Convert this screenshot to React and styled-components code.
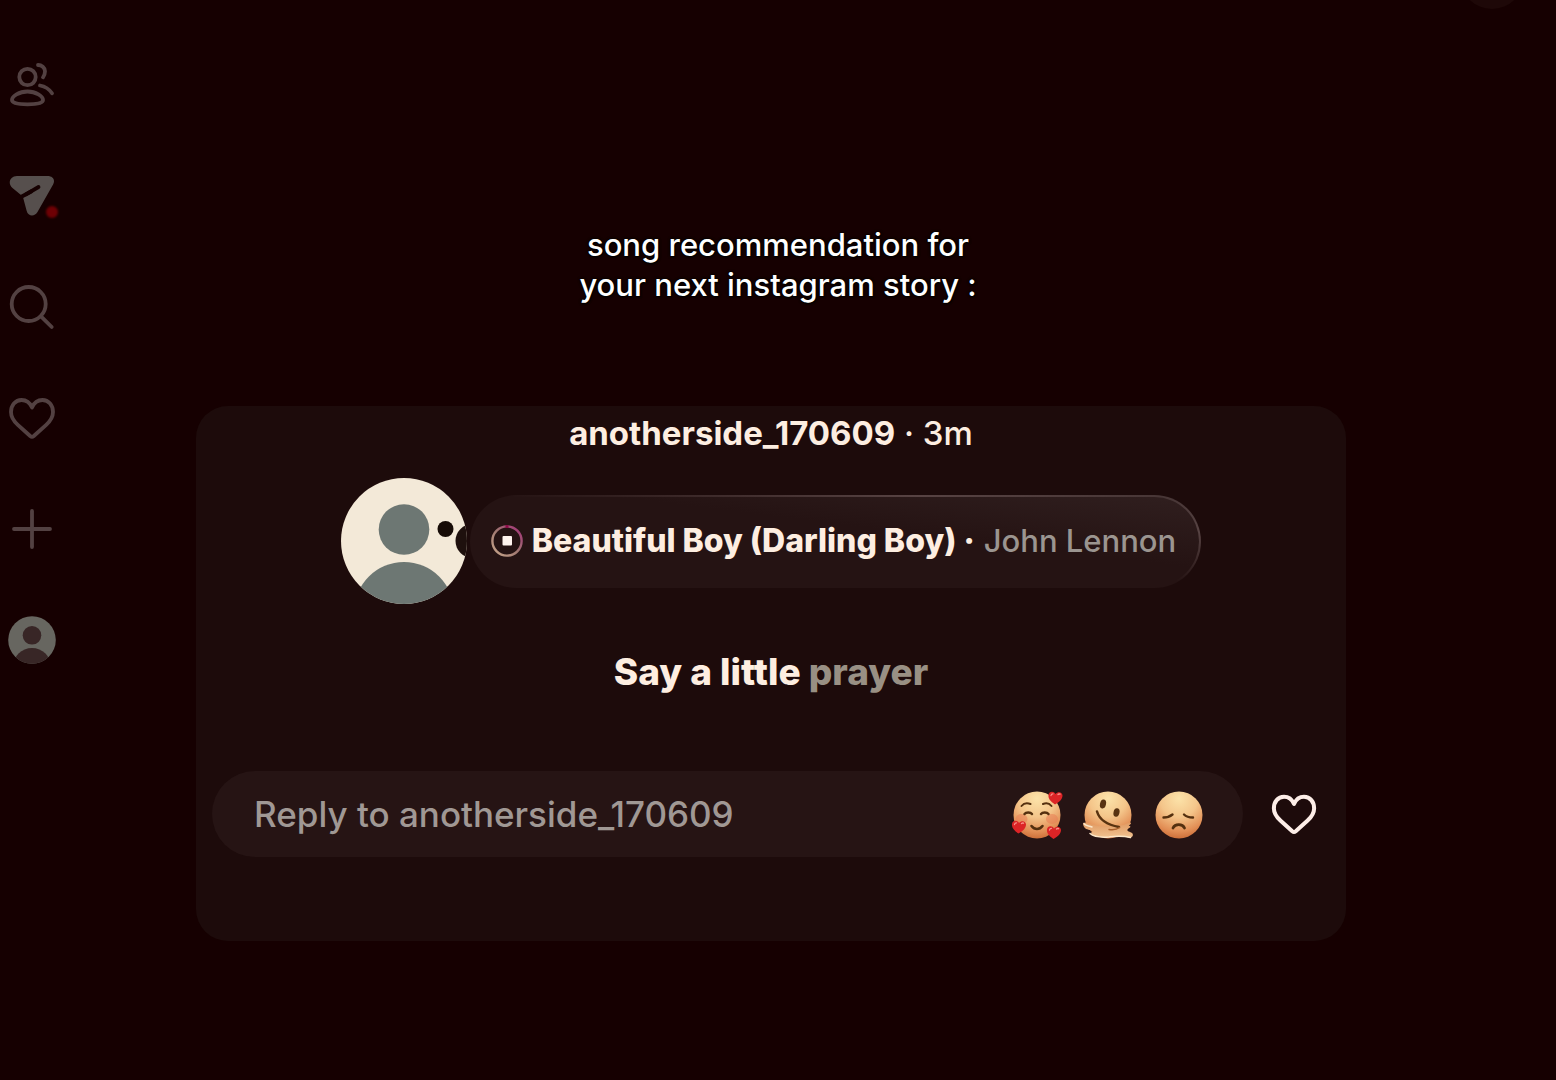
import React, { useState } from 'react';
import styled, { createGlobalStyle } from 'styled-components';

const GlobalStyle = createGlobalStyle`
  * {
    box-sizing: border-box;
  }

  body {
    margin: 0;
    background: #160001;
    color: #fdeee1;
    font-family: Inter, "Liberation Sans", sans-serif;
  }
`;

const Page = styled.div`
  position: relative;
  display: grid;
  grid-template-columns: 64px 1fr 64px;
  min-height: 100vh;
  overflow: hidden;
`;

const Rail = styled.nav`
  display: flex;
  flex-direction: column;
  gap: 63px;
  padding: 61px 8px 0;
`;

const RailLink = styled.a`
  position: relative;
  display: block;
  width: 48px;
  height: 48px;
  color: ${props => (props.$solid ? '#564f4d' : '#534142')};
`;

const Unread = styled.span`
  position: absolute;
  right: -2px;
  bottom: 2px;
  width: 12px;
  height: 12px;
  border-radius: 50%;
  background: #6e0004;
  filter: blur(1px);
`;

const Main = styled.main`
  padding-top: 225px;
`;

const Headline = styled.h1`
  margin: 0 0 101px;
  font-size: 31px;
  font-weight: 500;
  line-height: 40px;
  text-align: center;
  color: #fff;
  text-shadow: 0 0 3px #000, 0 0 3px #000, 1px 1px 2px #000;
`;

const Card = styled.article`
  display: flex;
  flex-direction: column;
  align-items: center;
  margin: 0 146px 0 132px;
  padding: 7px 16px 84px;
  border-radius: 32px;
  background: #1d0b0b;
`;

const Byline = styled.header`
  font-size: 33px;
  font-weight: 500;
  line-height: 40px;

  b {
    font-weight: 700;
  }
`;

const NoteRow = styled.div`
  display: flex;
  align-items: center;
  gap: 3px;
  margin-top: 25px;
`;

const Bubble = styled.div`
  display: flex;
  align-items: center;
  gap: 9px;
  height: 93px;
  padding: 0 23px 0 19px;
  border: 2px solid transparent;
  border-radius: 47px;
  background:
    linear-gradient(to top right, #251313 60%, #301f1f) padding-box,
    linear-gradient(to top right, #251313 52%, #574343 80%, #453434) border-box;
  font-size: 32px;
  line-height: 40px;
  white-space: nowrap;
`;

const Song = styled.b`
  font-weight: 800;
`;

const Artist = styled.span`
  color: #9b9590;
  font-size: 31px;
  font-weight: 500;
`;

const Lyric = styled.p`
  margin: 44px 0 75px;
  font-size: 37px;
  font-weight: 800;
  line-height: 48px;
`;

const Upcoming = styled.span`
  color: #999084;
`;

const ReplyRow = styled.form`
  display: flex;
  align-items: center;
  align-self: stretch;
  gap: 28px;
  padding-right: 13px;
`;

const ReplyField = styled.div`
  display: flex;
  flex: 1;
  align-items: center;
  gap: 19px;
  height: 86px;
  padding: 0 37px 0 42px;
  border-radius: 43px;
  background: #261414;
`;

const ReplyInput = styled.input`
  flex: 1;
  min-width: 0;
  padding: 0;
  border: 0;
  outline: 0;
  background: transparent;
  color: #fdeee1;
  font-family: inherit;
  font-size: 35px;
  font-weight: 500;
  line-height: 44px;

  &::placeholder {
    color: #a09894;
    opacity: 1;
  }
`;

const IconButton = styled.button`
  flex: none;
  width: ${props => props.$size}px;
  height: ${props => props.$size}px;
  padding: 0;
  border: 0;
  background: none;
  color: #fdeee8;
  cursor: pointer;
`;

const CloseButton = styled(IconButton)`
  position: absolute;
  top: -55px;
  right: 32px;
  border-radius: 50%;
  background: #1e0808;
`;

const Icon = styled.svg`
  display: block;
  width: 100%;
  height: 100%;
  fill: none;
  stroke: currentColor;
  stroke-width: ${props => props.$weight || 4};
  stroke-linecap: round;
  stroke-linejoin: round;
`;

const Picture = styled.svg`
  display: block;
  flex: none;
  width: ${props => props.$size}px;
  height: ${props => props.$size}px;
`;

const FriendsIcon = () => (
  <Icon viewBox="0 0 48 48" $weight={3.8}>
    <circle cx="19.5" cy="16" r="8.2" />
    <path d="M4 39c0-3.4 7-8.5 15.5-8.5S35 35.6 35 39c0 3.2-6 4.3-15.5 4.3S4 42.200 4 39z" />
    <path d="M30 4c3.5 0 7 2.6 7 6.3 0 2.2-.8 4.4-2 6" />
    <path d="M32 24.500c4.500.8 9.500 4 12 7.800" />
  </Icon>
);

const SendIcon = () => (
  <Icon viewBox="0 0 48 48" $weight={3.8}>
    <path
      fill="currentColor"
      stroke="none"
      d="M9 4h30.500c5.500 0 8 4 5.600 8.500L29.500 40c-2.800 5-9.500 4.500-10.800-1L14.800 24.500 4.500 16C-.8 11.500 2 4 9 4z"
    />
    <path stroke="#160001" strokeLinecap="butt" d="M12 25.500l12-6.500" />
    <path stroke="#160001" d="M18 22.300L30.500 15" />
  </Icon>
);

const SearchIcon = () => (
  <Icon viewBox="0 0 48 48" $weight={3.8}>
    <circle cx="20.7" cy="21" r="17" />
    <path d="M33 33.3L43.7 44" />
  </Icon>
);

const HeartIcon = ({ weight }) => (
  <Icon viewBox="0 0 48 48" $weight={weight}>
    <path d="M24 13.500C21.800 8.500 18 6 13.600 6 7.200 6 3 11.500 3 18c0 5.200 2.600 9 6.800 12.800L22.200 42c1.200 1 2.400 1 3.600 0L38.200 30.800C42.400 27 45 23.200 45 18c0-6.500-4.200-12-10.600-12C30 6 26.200 8.500 24 13.500z" />
  </Icon>
);

const PlusIcon = () => (
  <Icon viewBox="0 0 48 48" $weight={3.8}>
    <path d="M24 6v36M6 24h36" />
  </Icon>
);

const ProfileIcon = () => (
  <Picture viewBox="0 0 48 48" $size={48}>
    <clipPath id="profile-clip"><circle cx="24" cy="24" r="23.8" /></clipPath>
    <g clipPath="url(#profile-clip)">
      <rect width="48" height="48" fill="#676660" />
      <circle cx="24" cy="19.3" r="9.3" fill="#382626" />
      <circle cx="24" cy="51" r="19" fill="#382626" />
    </g>
  </Picture>
);

// The two dots are the tail of the note bubble next to it
const Avatar = () => (
  <Picture viewBox="0 0 126 126" $size={126} role="img" aria-label="anotherside_170609">
    <clipPath id="avatar-clip"><circle cx="63" cy="63" r="63" /></clipPath>
    <g clipPath="url(#avatar-clip)">
      <rect width="126" height="126" fill="#f3e9d8" />
      <circle cx="63" cy="51.5" r="25.3" fill="#6d7773" />
      <circle cx="63" cy="134" r="50" fill="#6d7773" />
      <circle cx="104.5" cy="51" r="8" fill="#170c07" />
      <circle cx="131.5" cy="63" r="17" fill="#1e100d" />
    </g>
  </Picture>
);

const StopIcon = () => (
  <Picture viewBox="0 0 32 32" $size={32}>
    <linearGradient id="ring" x1="0" y1="1" x2="1" y2="0">
      <stop offset="0" stopColor="#c9a78c" />
      <stop offset=".5" stopColor="#a07871" />
      <stop offset="1" stopColor="#a32c78" />
    </linearGradient>
    <circle cx="16" cy="16" r="14.6" fill="none" stroke="url(#ring)" strokeWidth="2.4" />
    <path d="M14.500 1.500h3" stroke="#8c0c48" strokeWidth="3" />
    <rect x="11.500" y="11" width="9.500" height="9.500" rx="1" fill="#fff4ee" />
  </Picture>
);

const Face = () => (
  <>
    <radialGradient id="face" cx=".5" cy=".15" r=".88">
      <stop offset="0" stopColor="#fce3a9" />
      <stop offset=".45" stopColor="#f4c58a" />
      <stop offset=".8" stopColor="#e28e55" />
      <stop offset="1" stopColor="#c96a35" />
    </radialGradient>
    <circle cx="25" cy="25" r="23.5" fill="url(#face)" />
  </>
);

const TinyHeart = ({ x, y }) => (
  <g transform={`translate(${x} ${y})`}>
    <path
      d="M6.500 13.500C2 10.500-.5 7.500 0 4 .5.500 5-.500 7 3c2.500-3.200 7-2 7 1.500 0 3.500-3 6.500-7.500 9z"
      fill="#dc2426"
    />
    <path d="M2.500 4.500c.2-1.200 1-1.700 2-1.700M9.500 3.500c.6-.5 1.400-.6 2-.3" fill="none" stroke="#f9918a" strokeWidth="1.300" strokeLinecap="round" />
  </g>
);

const LovedFace = () => (
  <Picture viewBox="0 -2 52 52" $size={52}>
    <Face />
    <ellipse cx="9.5" cy="29" rx="6" ry="5" fill="#e87951" opacity=".5" />
    <ellipse cx="40" cy="29" rx="6" ry="5" fill="#e87951" opacity=".5" />
    <g fill="none" stroke="#54300f" strokeWidth="2" strokeLinecap="round">
      <path d="M9.500 16c2-2.500 5.500-3.500 9-2M31 14c3.500-1.500 6.500-.5 8.500 2" />
      <path d="M12.500 24c1.500-2 6-2 7.500 0M29 24c1.500-2 6-2 7.500 0" strokeWidth="2.400" />
      <path d="M19.500 36c3 4 8 4 11 0" strokeWidth="2.600" />
    </g>
    <TinyHeart x={36.5} y={1} />
    <TinyHeart x={0} y={30} />
    <TinyHeart x={35} y={35.5} />
  </Picture>
);

const MeltingFace = () => (
  <Picture viewBox="0 -2 52 52" $size={52}>
    <Face />
    <linearGradient id="melt" x1="0" y1="0" x2="0" y2="1">
      <stop offset="0" stopColor="#e09a62" />
      <stop offset="1" stopColor="#f0c290" />
    </linearGradient>
    <path
      d="M.5 33c2.500-1.500 5 .5 8 1.500 9 2.500 22 2.500 32 .5 2.500-.7 4.500-2.500 7-2.500 1.500 1-.5 2-2 3 1.500.3 2.500 1 1.500 2-1.500 1-3 1.500-2.500 3 .5 1.500 3 1 5 3 1.200 2.500-.5 4.500-3.500 4-5-.8-8-1.500-12-1-6 .8-16 1.500-22-.5-4-1-5-3-2.500-4.500C8 39.500 3 40 1.500 37.500.5 36-.5 34.500.5 33z"
      fill="url(#melt)"
    />
    <path d="M1 33.500c1 2.500 4.500 2 8 3.500M7 43.500c4 3.500 12 4 19 3.500 8-.8 12-1.500 21.500.5" fill="none" stroke="#fbe6c8" strokeWidth="1.500" strokeLinecap="round" />
    <ellipse cx="20" cy="14" rx="3" ry="4.5" fill="#593311" transform="rotate(12 20 14)" />
    <ellipse cx="33.5" cy="22.5" rx="3" ry="4.300" fill="#593311" transform="rotate(12 33.5 22.5)" />
    <path d="M14 21.500c2.500 8.500 11 13.500 22 15.500" fill="none" stroke="#593311" strokeWidth="2.500" strokeLinecap="round" />
    <path d="M26 39.500c4 .5 8 0 10.500-2" fill="none" stroke="#a9602d" strokeWidth="1.400" strokeLinecap="round" />
  </Picture>
);

const SadFace = () => (
  <Picture viewBox="0 -2 52 52" $size={52}>
    <Face />
    <g fill="none" stroke="#54300f" strokeWidth="2.4" strokeLinecap="round">
      <path d="M9.500 27.500c3.500 0 6.500-1 9-3M30 24.500c2 2 5.500 3 9 3" />
      <path d="M19 38c2-4.500 9.500-4.500 11.500 0" strokeWidth="2.800" />
    </g>
  </Picture>
);

const railItems = [
  { label: 'Friends', icon: <FriendsIcon /> },
  { label: 'Messages', icon: <SendIcon />, solid: true, unread: true },
  { label: 'Search', icon: <SearchIcon /> },
  { label: 'Activity', icon: <HeartIcon weight={3.8} /> },
  { label: 'Create', icon: <PlusIcon /> },
  { label: 'Profile', icon: <ProfileIcon /> },
];

const reactions = [
  { label: 'Loved', face: <LovedFace /> },
  { label: 'Melting', face: <MeltingFace /> },
  { label: 'Sad', face: <SadFace /> },
];

function App() {
  const [reply, setReply] = useState('');

  return (
    <>
      <GlobalStyle />
      <Page>
        <Rail>
          {railItems.map(item => (
            <RailLink key={item.label} href="#" aria-label={item.label} $solid={item.solid}>
              {item.icon}
              {item.unread ? <Unread /> : null}
            </RailLink>
          ))}
        </Rail>

        <Main>
          <Headline>
            song recommendation for
            <br />
            your next instagram story :
          </Headline>

          <Card>
            <Byline><b>anotherside_170609</b> · 3m</Byline>

            <NoteRow>
              <Avatar />
              <Bubble>
                <StopIcon />
                <span>
                  <Song>Beautiful Boy (Darling Boy) ·</Song> <Artist>John Lennon</Artist>
                </span>
              </Bubble>
            </NoteRow>

            <Lyric>Say a little <Upcoming>prayer</Upcoming></Lyric>

            <ReplyRow onSubmit={e => e.preventDefault()}>
              <ReplyField>
                <ReplyInput
                  type="text"
                  aria-label="Reply to anotherside_170609"
                  placeholder="Reply to anotherside_170609"
                  value={reply}
                  onChange={e => setReply(e.target.value)}
                />
                {reactions.map(({ label, face }) => (
                  <IconButton key={label} type="button" aria-label={label} $size={52}>{face}</IconButton>
                ))}
              </ReplyField>
              <IconButton type="button" aria-label="Like" $size={46}>
                <HeartIcon weight={4.2} />
              </IconButton>
            </ReplyRow>
          </Card>
        </Main>

        <CloseButton type="button" aria-label="Close" $size={64} />
      </Page>
    </>
  );
}

export default App;
